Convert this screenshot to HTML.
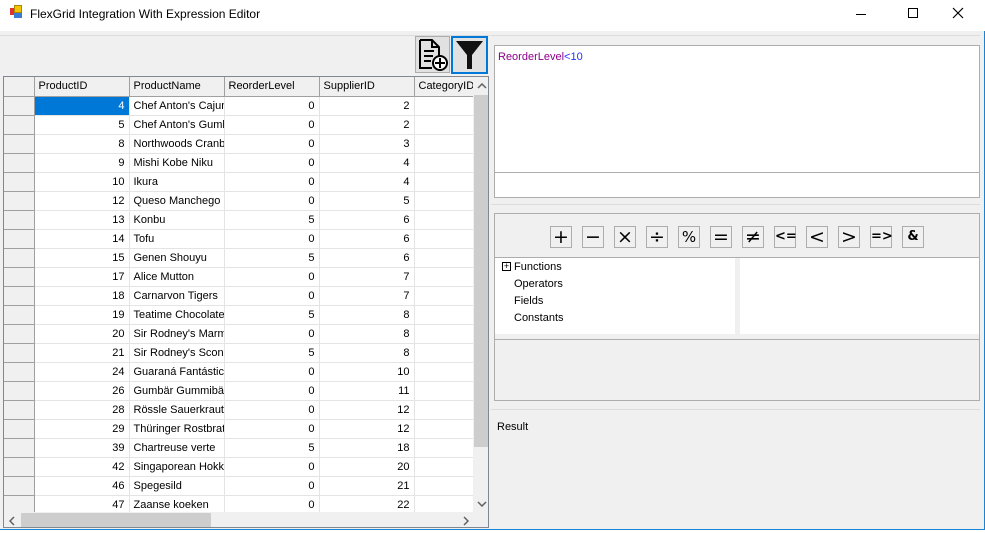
<!DOCTYPE html>
<html><head><meta charset="utf-8"><style>
*{box-sizing:border-box;margin:0;padding:0}
body{width:985px;height:533px;position:relative;background:#fff;font-family:"Liberation Sans",sans-serif;font-size:11px;color:#000;overflow:hidden}
.a{position:absolute}
table{border-collapse:collapse;table-layout:fixed}
td{height:19px;border-right:1px solid #e4e4e4;border-bottom:1px solid #e4e4e4;padding:0 4px;white-space:nowrap;overflow:hidden;background:#fff}
td.h{background:#f0f0f0;border-right:1px solid #a0a0a0;border-bottom:1px solid #a0a0a0}
td.r{text-align:right}
.btn{position:absolute;top:226px;width:22px;height:22px;border:1px solid #adadad;background:#f0f0f0;font-size:19px;font-family:"DejaVu Sans",sans-serif;text-align:center;line-height:20px}
</style></head><body>
<div class="a" style="left:0;top:0;width:985px;height:530px;border:1px solid #1883d7;border-top:none;border-left:none;background:#f0f0f0"></div>
<div class="a" style="left:0;top:0;width:985px;height:31px;background:#fff"></div>
<div class="a" style="left:10px;top:8px;width:7px;height:7px;background:#d33"></div>
<div class="a" style="left:14px;top:5px;width:8px;height:8px;background:#f5c400;border:1px solid #a80"></div>
<div class="a" style="left:14px;top:13px;width:8px;height:5px;background:#3a7bd5"></div>
<div class="a" style="left:30px;top:7px;font-size:12px">FlexGrid Integration With Expression Editor</div>
<div class="a" style="left:856px;top:14px;width:10px;height:1px;background:#000"></div>
<div class="a" style="left:908px;top:8px;width:10px;height:10px;border:1px solid #000"></div>
<svg class="a" style="left:952px;top:7px" width="12" height="12"><path d="M1 1L11 11M11 1L1 11" stroke="#000" stroke-width="1.2"/></svg>
<div class="a" style="left:0;top:35px;width:490px;height:1px;background:#dcdcdc"></div>
<div class="a" style="left:415px;top:36px;width:35px;height:37px;background:#e1e1e1;border:1px solid #adadad">
<svg width="33" height="35" viewBox="0 0 33 35"><path d="M4 3h12l7 7v10M4 3v28h12M16 3v7h7M8 14h10M8 19h9M8 24h7" stroke="#000" stroke-width="2" fill="none"/><circle cx="24" cy="26" r="7" fill="#fff" stroke="#000" stroke-width="2"/><path d="M24 21v10M19 26h10" stroke="#000" stroke-width="2"/></svg></div>
<div class="a" style="left:451px;top:36px;width:37px;height:38px;background:#e1e1e1;border:2px solid #0078d7">
<svg width="33" height="34" viewBox="0 0 33 34"><path d="M3 3h27L19 17v14h-5V17z" fill="#111"/></svg></div>
<div class="a" style="left:3px;top:76px;width:486px;height:452px;border:1px solid #828790;background:#fff;overflow:hidden">
<table style="width:469px">
<colgroup><col style="width:30px"><col style="width:95px"><col style="width:95px"><col style="width:95px"><col style="width:95px"><col style="width:59px"></colgroup>
<tr><td class="h"></td><td class="h">ProductID</td><td class="h">ProductName</td><td class="h">ReorderLevel</td><td class="h">SupplierID</td><td class="h">CategoryID</td></tr>
<tr><td class="h"></td><td class="r" style="background:#0078d7;color:#fff">4</td><td>Chef Anton's Cajun</td><td class="r">0</td><td class="r">2</td><td></td></tr>
<tr><td class="h"></td><td class="r">5</td><td>Chef Anton's Gumbo</td><td class="r">0</td><td class="r">2</td><td></td></tr>
<tr><td class="h"></td><td class="r">8</td><td>Northwoods Cranberry</td><td class="r">0</td><td class="r">3</td><td></td></tr>
<tr><td class="h"></td><td class="r">9</td><td>Mishi Kobe Niku</td><td class="r">0</td><td class="r">4</td><td></td></tr>
<tr><td class="h"></td><td class="r">10</td><td>Ikura</td><td class="r">0</td><td class="r">4</td><td></td></tr>
<tr><td class="h"></td><td class="r">12</td><td>Queso Manchego</td><td class="r">0</td><td class="r">5</td><td></td></tr>
<tr><td class="h"></td><td class="r">13</td><td>Konbu</td><td class="r">5</td><td class="r">6</td><td></td></tr>
<tr><td class="h"></td><td class="r">14</td><td>Tofu</td><td class="r">0</td><td class="r">6</td><td></td></tr>
<tr><td class="h"></td><td class="r">15</td><td>Genen Shouyu</td><td class="r">5</td><td class="r">6</td><td></td></tr>
<tr><td class="h"></td><td class="r">17</td><td>Alice Mutton</td><td class="r">0</td><td class="r">7</td><td></td></tr>
<tr><td class="h"></td><td class="r">18</td><td>Carnarvon Tigers</td><td class="r">0</td><td class="r">7</td><td></td></tr>
<tr><td class="h"></td><td class="r">19</td><td>Teatime Chocolate</td><td class="r">5</td><td class="r">8</td><td></td></tr>
<tr><td class="h"></td><td class="r">20</td><td>Sir Rodney's Marmalade</td><td class="r">0</td><td class="r">8</td><td></td></tr>
<tr><td class="h"></td><td class="r">21</td><td>Sir Rodney's Scones</td><td class="r">5</td><td class="r">8</td><td></td></tr>
<tr><td class="h"></td><td class="r">24</td><td>Guaraná Fantástica</td><td class="r">0</td><td class="r">10</td><td></td></tr>
<tr><td class="h"></td><td class="r">26</td><td>Gumbär Gummibärchen</td><td class="r">0</td><td class="r">11</td><td></td></tr>
<tr><td class="h"></td><td class="r">28</td><td>Rössle Sauerkraut</td><td class="r">0</td><td class="r">12</td><td></td></tr>
<tr><td class="h"></td><td class="r">29</td><td>Thüringer Rostbratwurst</td><td class="r">0</td><td class="r">12</td><td></td></tr>
<tr><td class="h"></td><td class="r">39</td><td>Chartreuse verte</td><td class="r">5</td><td class="r">18</td><td></td></tr>
<tr><td class="h"></td><td class="r">42</td><td>Singaporean Hokkien</td><td class="r">0</td><td class="r">20</td><td></td></tr>
<tr><td class="h"></td><td class="r">46</td><td>Spegesild</td><td class="r">0</td><td class="r">21</td><td></td></tr>
<tr><td class="h"></td><td class="r">47</td><td>Zaanse koeken</td><td class="r">0</td><td class="r">22</td><td></td></tr>
</table>
<div class="a" style="left:469px;top:0;width:16px;height:435px;background:#f0f0f0"></div>
<div class="a" style="left:470px;top:18px;width:15px;height:352px;background:#cdcdcd"></div>
<svg class="a" style="left:473px;top:6px" width="10" height="6"><path d="M1 5L5 1L9 5" stroke="#606060" fill="none" stroke-width="1.5"/></svg>
<svg class="a" style="left:473px;top:424px" width="10" height="6"><path d="M1 1L5 5L9 1" stroke="#606060" fill="none" stroke-width="1.5"/></svg>
<div class="a" style="left:0;top:435px;width:485px;height:16px;background:#f0f0f0"></div>
<div class="a" style="left:17px;top:436px;width:190px;height:14px;background:#cdcdcd"></div>
<svg class="a" style="left:5px;top:439px" width="6" height="10"><path d="M5 1L1 5L5 9" stroke="#606060" fill="none" stroke-width="1.5"/></svg>
<svg class="a" style="left:459px;top:439px" width="6" height="10"><path d="M1 1L5 5L1 9" stroke="#606060" fill="none" stroke-width="1.5"/></svg>
</div>
<div class="a" style="left:491px;top:35px;width:489px;height:1px;background:#dcdcdc"></div>
<div class="a" style="left:494px;top:45px;width:486px;height:153px;border:1px solid #adadad;background:#fff"></div>
<div class="a" style="left:495px;top:172px;width:484px;height:1px;background:#adadad"></div>
<div class="a" style="left:498px;top:51px;font-size:11px;color:#8b008b">ReorderLevel<span style="color:#2030ff">&lt;10</span></div>
<div class="a" style="left:491px;top:204px;width:489px;height:1px;background:#dcdcdc"></div>
<div class="a" style="left:494px;top:213px;width:486px;height:188px;border:1px solid #adadad;background:#f0f0f0"></div>
<div class="btn" style="left:550px">+</div>
<div class="btn" style="left:582px">−</div>
<div class="btn" style="left:614px">×</div>
<div class="btn" style="left:646px">÷</div>
<div class="btn" style="left:678px;font-size:15px">%</div>
<div class="btn" style="left:710px">=</div>
<div class="btn" style="left:742px">≠</div>
<div class="btn" style="left:774px;font-size:13px;font-weight:bold">&lt;=</div>
<div class="btn" style="left:806px">&lt;</div>
<div class="btn" style="left:838px">&gt;</div>
<div class="btn" style="left:870px;font-size:13px;font-weight:bold">=&gt;</div>
<div class="btn" style="left:902px;font-size:13px;font-weight:bold">&amp;</div>
<div class="a" style="left:495px;top:257px;width:484px;height:1px;background:#adadad"></div>
<div class="a" style="left:495px;top:258px;width:240px;height:76px;background:#fff"></div>
<div class="a" style="left:740px;top:258px;width:239px;height:76px;background:#fff"></div>
<div class="a" style="left:495px;top:339px;width:484px;height:1px;background:#adadad"></div>
<div class="a" style="left:502px;top:262px;width:9px;height:9px;border:1px solid #000;font-size:9px;line-height:7px;text-align:center">+</div>
<div class="a" style="left:514px;top:261px">Functions</div>
<div class="a" style="left:514px;top:278px">Operators</div>
<div class="a" style="left:514px;top:295px">Fields</div>
<div class="a" style="left:514px;top:312px">Constants</div>
<div class="a" style="left:491px;top:409px;width:489px;height:1px;background:#dcdcdc"></div>
<div class="a" style="left:497px;top:421px">Result</div>
</body></html>
